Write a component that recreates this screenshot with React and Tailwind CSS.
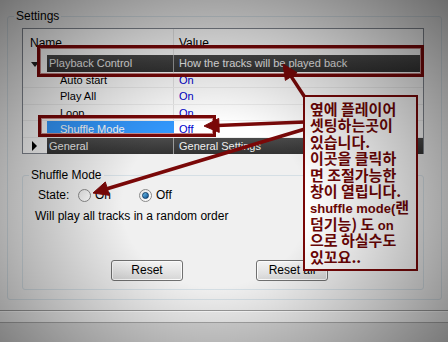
import React from 'react';

const arrows = [
  { x1: 306, y1: 99, x2: 283, y2: 64 },
  { x1: 305, y1: 122, x2: 204, y2: 126 },
  { x1: 305, y1: 129, x2: 93, y2: 193 },
];

const arrowParts = ({ x1, y1, x2, y2 }) => {
  const len = Math.hypot(x2 - x1, y2 - y1);
  const ux = (x2 - x1) / len;
  const uy = (y2 - y1) / len;
  const bx = x2 - ux * 15;
  const by = y2 - uy * 15;
  const px = -uy * 7;
  const py = ux * 7;
  return {
    line: [x1, y1, bx + ux * 2, by + uy * 2],
    head: `${x2},${y2} ${bx + px},${by + py} ${bx - px},${by - py}`,
  };
};

const Radio = ({ checked }) => (
  <span className="relative inline-flex w-[13px] h-[13px] rounded-full border border-[#8a8a8a] bg-gradient-to-br from-[#e6e6e6] to-[#ffffff] items-center justify-center">
    {checked && (
      <span className="w-[7px] h-[7px] rounded-full bg-gradient-to-br from-[#6fc3ee] to-[#0a4f8f] border border-[#0b3a66]" />
    )}
  </span>
);

const SubRow = ({ name, value }) => (
  <div className="flex h-[16.5px] leading-[16.5px] border-b border-[#efefef]">
    <div className="w-[151px] pl-[37px] border-r border-[#e6e6e6]">{name}</div>
    <div className="pl-[5px] text-[#0000cc]">{value}</div>
  </div>
);

const GroupRow = ({ name, value, open }) => (
  <div className="flex h-[16.5px] leading-[16.5px]">
    <div className="w-[24px] flex items-center justify-center">
      {open ? (
        <span className="mt-[2px] w-0 h-0 border-l-[4px] border-r-[4px] border-t-[5px] border-l-transparent border-r-transparent border-t-[#222]" />
      ) : (
        <span className="ml-[-2px] w-0 h-0 border-t-[5px] border-b-[5px] border-l-[5px] border-t-transparent border-b-transparent border-l-[#000]" />
      )}
    </div>
    <div className="w-[127px] pl-[2px] bg-gradient-to-b from-[#4a4a4a] to-[#333333] text-[#eeeeee] border-r border-[#9a9a9a]">
      {name}
    </div>
    <div className="flex-1 pl-[5px] bg-gradient-to-b from-[#4a4a4a] to-[#333333] text-[#eeeeee]">{value}</div>
  </div>
);

const Button = ({ children }) => (
  <button className="w-[72px] h-[21px] rounded-[3px] border border-[#707070] bg-gradient-to-b from-[#f4f4f4] via-[#e6e6e6] to-[#d6d6d6] text-[12px] leading-[19px] text-black shadow-[inset_0_0_0_1px_#fbfbfb]">
    {children}
  </button>
);

export default function App() {
  return (
    <div className="relative w-[448px] h-[342px] overflow-hidden bg-[#f0f0f0] font-['Liberation_Sans',Arial,sans-serif] text-[11px] text-black">
      <div className="pt-[9px] pl-[7px] pr-[6px]">
        <fieldset className="h-[291px] border border-[#d5dfe5] rounded-[3px]">
          <legend className="ml-[6px] px-[2px] text-[12px] leading-[14px]">Settings</legend>

          <div className="ml-[14px] mt-[5px] w-[402px] h-[126px] border border-[#828790] bg-white">
            <div className="flex h-[26px] leading-[26px] text-[12px]">
              <div className="w-[151px] pl-[7px] pt-[1px] border-r border-[#e6e6e6]">Name</div>
              <div className="pl-[5px] pt-[1px]">Value</div>
            </div>
            <GroupRow open name="Playback Control" value="How the tracks will be played back" />
            <SubRow name="Auto start" value="On" />
            <SubRow name="Play All" value="On" />
            <SubRow name="Loop" value="On" />
            <div className="flex h-[16.5px] leading-[16.5px] border-b border-[#efefef]">
              <div className="w-[24px]" />
              <div className="w-[127px] pl-[13px] bg-[#3399ff] text-white">Shuffle Mode</div>
              <div className="pl-[5px] text-[#0000cc]">Off</div>
            </div>
            <GroupRow name="General" value="General Settings" />
          </div>

          <fieldset className="ml-[14px] mt-[14px] w-[402px] h-[122px] border border-[#d5dfe5] rounded-[3px]">
            <legend className="ml-[6px] px-[2px] text-[12px] leading-[14px]">Shuffle Mode</legend>
            <div className="flex items-center h-[16px] mt-[5px] pl-[15px] text-[12px]">
              <span className="w-[40px]">State:</span>
              <Radio />
              <span className="ml-[4px] w-[44px]">On</span>
              <Radio checked />
              <span className="ml-[4px]">Off</span>
            </div>
            <div className="mt-[6px] pl-[12px] h-[14px] leading-[14px] text-[12px]">
              Will play all tracks in a random order
            </div>
            <div className="flex mt-[37px] pl-[88px] gap-[73px]">
              <Button>Reset</Button>
              <Button>Reset all</Button>
            </div>
          </fieldset>
        </fieldset>
      </div>

      <div className="mt-[10px] h-[12px] border-t border-[#9c9c9c] shadow-[inset_0_1px_0_#ffffff]" />
      <div className="h-[40px] border-t border-[#a8a8a8] bg-[#d6d6d6]" />

      {/* highlight boxes */}
      <div className="absolute left-[37px] top-[45px] w-[387px] h-[32px] border-[3px] border-[#7a0808] shadow-[inset_0_0_0_1px_#c98a8a]" />
      <div className="absolute left-[38px] top-[115px] w-[178px] h-[22px] border-[3px] border-[#7a0808] shadow-[inset_0_0_0_1px_#c98a8a]" />

      <svg className="absolute inset-0 pointer-events-none" width="448" height="342">
        {arrows.map((a, i) => {
          const p = arrowParts(a);
          return (
            <g key={i} fill="#7a0808" stroke="#7a0808">
              <line x1={p.line[0]} y1={p.line[1]} x2={p.line[2]} y2={p.line[3]} strokeWidth="3.5" />
              <polygon points={p.head} strokeWidth="1" strokeLinejoin="round" />
            </g>
          );
        })}
      </svg>

      {/* note */}
      <div className="absolute left-[303px] top-[95px] w-[115px] h-[176px] border-2 border-[#7a0808] bg-white pl-[5px] pt-[4px] font-['Noto_Sans_CJK_KR',sans-serif] font-bold text-[#6e0606] text-[15px] leading-[16.4px] whitespace-nowrap">
        <div className="h-[16.4px]">옆에 플레이어</div>
        <div className="h-[16.4px]">셋팅하는곳이</div>
        <div className="h-[16.4px]">있습니다.</div>
        <div className="h-[16.4px]">이곳을 클릭하</div>
        <div className="h-[16.4px]">면 조절가능한</div>
        <div className="h-[16.4px]">창이 열립니다.</div>
        <div className="h-[16.4px]"><span className="font-['Liberation_Sans',sans-serif] text-[13px]">shuffle mode(</span>랜</div>
        <div className="h-[16.4px]">덤기능) 도 <span className="font-['Liberation_Sans',sans-serif] text-[13px]">on</span></div>
        <div className="h-[16.4px]">으로 하실수도</div>
        <div className="h-[16.4px]">있꼬요..</div>
      </div>

      {/* vignette */}
      <div className="absolute inset-0 pointer-events-none bg-[radial-gradient(ellipse_at_48%_60%,rgba(0,0,0,0)_28%,rgba(0,0,0,0.25)_62%,rgba(0,0,0,0.55)_100%)]" />
    </div>
  );
}
